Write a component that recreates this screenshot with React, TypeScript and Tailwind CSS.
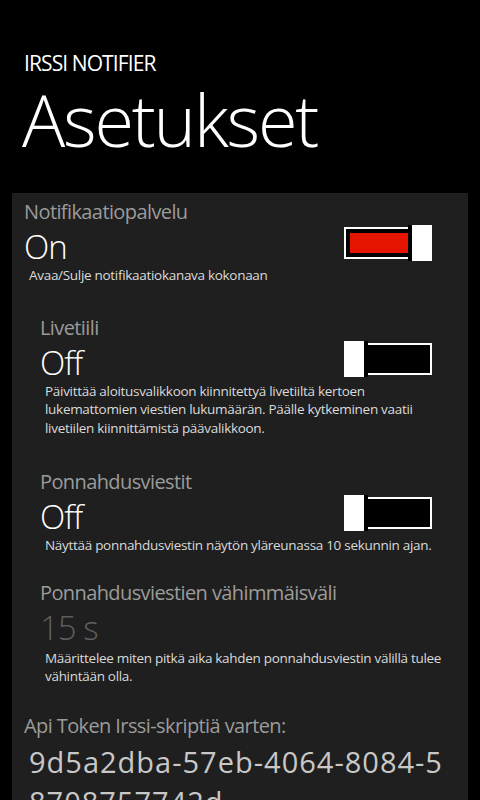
import type { ReactNode } from 'react';

const font = { fontFamily: '"Open Sans", "Noto Sans", sans-serif' };

const Toggle = ({ on }: { on: boolean }) => (
  <div className="relative mr-[24px] h-[36px] w-[88px] shrink-0 flex items-center">
    <div className="h-[32px] w-full border-2 border-white bg-black p-[4px]">
      {on && <div className="h-full w-[58px] bg-[#e51400]" />}
    </div>
    {on ? (
      <div className="absolute right-0 top-0 h-[36px] w-[24px] border-l-4 border-black bg-white" />
    ) : (
      <div className="absolute left-0 top-0 h-[36px] w-[24px] border-r-4 border-black bg-white" />
    )}
  </div>
);

const Label = ({ children, className = '' }: { children: ReactNode; className?: string }) => (
  <div className={`text-[20px] leading-[26px] tracking-[-0.6px] text-[#9b9b9b] ${className}`}>{children}</div>
);

const Value = ({ children, dim }: { children: ReactNode; dim?: boolean }) => (
  <div className={`pt-[4px] text-[33px] font-light leading-[36px] tracking-[-1px] ${dim ? 'text-[#5e5e5e]' : 'text-white'}`}>
    {children}
  </div>
);

const Desc = ({ lines, className = '' }: { lines: string[]; className?: string }) => (
  <div className={`ml-[5px] text-[13.5px] leading-[18.5px] tracking-[-0.3px] text-[#dadada] ${className}`}>
    {lines.map((l) => (
      <div key={l} className="whitespace-nowrap">{l}</div>
    ))}
  </div>
);

const ToggleSetting = ({ label, on, desc, className = '' }: { label: string; on: boolean; desc: string[]; className?: string }) => (
  <div className={className}>
    <Label>{label}</Label>
    <div className="flex items-start justify-between">
      <Value>{on ? 'On' : 'Off'}</Value>
      <Toggle on={on} />
    </div>
    <Desc lines={desc} className="mt-[1px]" />
  </div>
);

export default function App() {
  return (
    <div className="min-h-[800px] bg-black text-white" style={font}>
      {/* Header */}
      <div className="px-6 pt-[49px]">
        <div className="text-[21px] leading-[28px] tracking-[-0.9px]">IRSSI NOTIFIER</div>
        <div className="-ml-[2px] mt-[2px] text-[72px] font-light leading-[80px] tracking-[-2.2px]">Asetukset</div>
      </div>

      {/* Settings panel */}
      <div className="mx-3 mt-[34px] bg-[#1f1f1f] px-3 pt-[5px] pb-8">
        <div>
          <Label className="leading-[27px]">Notifikaatiopalvelu</Label>
          <div className="flex items-start justify-between">
            <Value>On</Value>
            <Toggle on />
          </div>
          <Desc lines={['Avaa/Sulje notifikaatiokanava kokonaan']} className="mt-[1px]" />
        </div>

        <div className="pl-4">
          <ToggleSetting
            className="mt-[30px]"
            label="Livetiili"
            on={false}
            desc={[
              'Päivittää aloitusvalikkoon kiinnitettyä livetiiltä kertoen',
              'lukemattomien viestien lukumäärän. Päälle kytkeminen vaatii',
              'livetiilen kiinnittämistä päävalikkoon.',
            ]}
          />
          <ToggleSetting
            className="mt-[32px]"
            label="Ponnahdusviestit"
            on={false}
            desc={['Näyttää ponnahdusviestin näytön yläreunassa 10 sekunnin ajan.']}
          />
          <div className="mt-[25px]">
            <Label>Ponnahdusviestien vähimmäisväli</Label>
            <Value dim>15 s</Value>
            <Desc
              className="mt-[3px]"
              lines={['Määrittelee miten pitkä aika kahden ponnahdusviestin välillä tulee', 'vähintään olla.']}
            />
          </div>
        </div>

        <div className="mt-[27px]">
          <Label>Api Token Irssi-skriptiä varten:</Label>
          <div className="ml-[5px] mt-[3px] break-all text-[29px] leading-[40px] tracking-[1px] text-[#c8c8c8]">
            9d5a2dba-57eb-4064-8084-58708757742d
          </div>
        </div>
      </div>
    </div>
  );
}
